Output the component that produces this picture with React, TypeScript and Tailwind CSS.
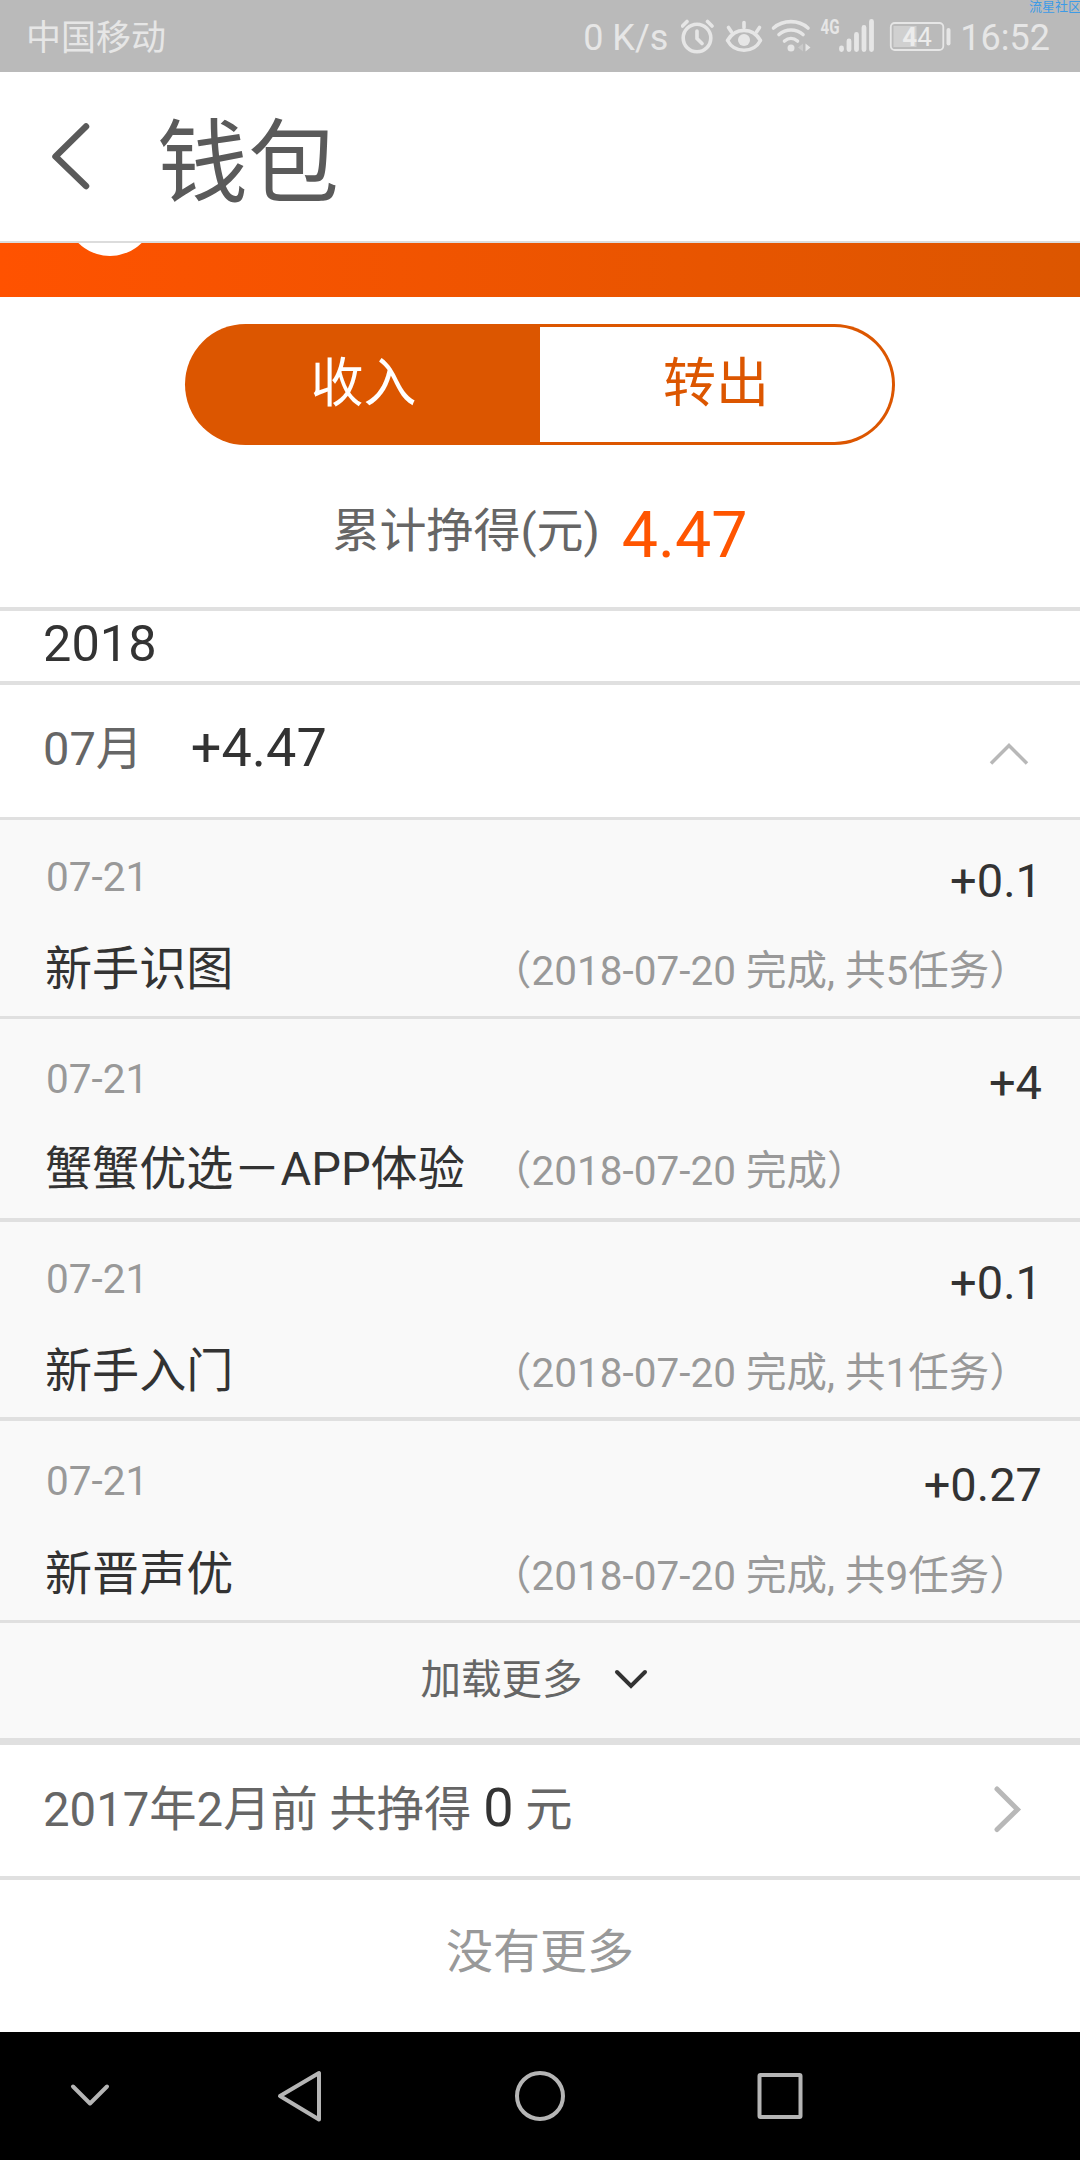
import type { ReactNode } from 'react';

const RECORDS = [
  { id: 1, date: '07-21', amount: '+0.1', title: '新手识图', note: '（2018-07-20 完成, 共5任务）', box: 'h-[199px] border-b-[3px] pt-[33px] gap-[35px]' },
  { id: 2, date: '07-21', amount: '+4', title: '蟹蟹优选－APP体验', note: '（2018-07-20 完成）', box: 'h-[203px] border-b-4 pt-9 gap-[33px]' },
  { id: 3, date: '07-21', amount: '+0.1', title: '新手入门', note: '（2018-07-20 完成, 共1任务）', box: 'h-[199px] border-b-4 pt-[33px] gap-[35px]' },
  { id: 4, date: '07-21', amount: '+0.27', title: '新晋声优', note: '（2018-07-20 完成, 共9任务）', box: 'h-[202px] border-b-[3px] pt-9 gap-9' },
];

function StatusBar() {
  return (
    <header className="relative flex h-[72px] items-center bg-[#bababa] pl-[26px] pr-[30px] pt-[3px] text-[35px] leading-none text-[#e6e6e6]">
      <span className="flex-1 pt-[2px]">中国移动</span>
      <span className="text-[36px]">0 K/s</span>
      <svg className="ml-[13px] h-[72px] w-[279px] -mt-[3px]" viewBox="682 0 279 72" fill="none" stroke="#e6e6e6" strokeWidth="3.6" strokeLinecap="round">
        {/* alarm */}
        <circle cx="698" cy="38" r="13.8" />
        <path d="M698 31v7.500l5 5M683.500 26l4.500-4.500M713 26l-4.500-4.500" />
        {/* eye comfort */}
        <path d="M728.500 40.500c8-13.500 25-13.500 33 0c-7 13-26 13-33 0Z" strokeLinejoin="round" />
        <circle cx="745" cy="40" r="6" fill="#e6e6e6" stroke="none" />
        <path d="M745 22.500v5M729.500 27.500l3 4.500M760.500 27.500l-3 4.500" />
        {/* wifi */}
        <path d="M774.500 28c10-8.500 25-8.500 34.500 0M780 34.500c7-6 17-6 24 0M785.500 41c4-3.400 9-3.400 13 0" />
        <circle cx="792" cy="48" r="3.500" fill="#e6e6e6" stroke="none" />
        <path d="M806.500 43.500v8l5-4z" fill="#e6e6e6" stroke="none" />
        <path d="M804 43.500v8l-5-4z" fill="#cacaca" stroke="none" />
        {/* mobile signal */}
        <text x="821.500" y="33.500" fontSize="20" fontWeight="700" textLength="19" lengthAdjust="spacingAndGlyphs" fill="#e6e6e6" stroke="none">4G</text>
        <path d="M842.500 48v1.500M850 41v8.500M857.500 34.500v15M865 27.500v22M872.500 21.500v28" strokeWidth="4.800" />
        {/* battery */}
        <rect x="891.800" y="23" width="52.500" height="27" rx="4" strokeWidth="1.800" />
        <rect x="894.500" y="26" width="23" height="21" fill="#d0d0d0" stroke="none" />
        <path d="M949.500 30v13.500" strokeWidth="4" />
        <text x="918" y="45.800" fontSize="26" textAnchor="middle" fill="#ececec" stroke="none"><tspan fontWeight="700">4</tspan>4</text>
      </svg>
      <span className="text-[36px]">16:52</span>
      <span className="absolute left-[1029px] top-0 w-[51px] overflow-hidden whitespace-nowrap text-[13px] leading-[13px] text-[#3d9be6]">流星社区</span>
    </header>
  );
}

function NavBar() {
  return (
    <div className="flex h-[171px] items-center border-b-2 border-[#dcdcdc] bg-white pl-[50px]">
      <svg className="h-[72px] w-[42px]" viewBox="0 0 42 72" fill="none" stroke="#5a5a5a" strokeWidth="6.500" strokeLinecap="round" strokeLinejoin="round">
        <path d="M36 5.500L5.500 35.500L36 65" />
      </svg>
      <h1 className="ml-[65px] pt-[15px] text-[91px] leading-[110px] text-[#5a5a5a]">钱包</h1>
    </div>
  );
}

function Divided({ className, children }: { className: string; children: ReactNode }) {
  return <div className={`flex border-[#e0e0e0] ${className}`}>{children}</div>;
}

function Records() {
  return (
    <ul className="bg-[#f9f9f9]">
      {RECORDS.map((r) => (
        <li key={r.id} className={`flex flex-col border-[#e0e0e0] pl-[45px] pr-[38px] ${r.box}`}>
          <div className="flex h-[53px] justify-between leading-[48px]">
            <span className="pl-px text-[40.5px] text-[#999]">{r.date}</span>
            <span className="mt-1 text-[47px] text-[#333]">{r.amount}</span>
          </div>
          <div className="flex items-baseline whitespace-nowrap leading-[56px]">
            <span className="w-[446px] text-[47.1px] text-[#333]">{r.title}</span>
            <span className="text-[40.5px] text-[#999]">{r.note}</span>
          </div>
        </li>
      ))}
    </ul>
  );
}

function SystemNav() {
  return (
    <nav className="h-32 bg-black">
      <svg className="h-32 w-full" viewBox="0 0 1080 128" fill="none" stroke="#b5b5b5" strokeWidth="4" strokeLinecap="round" strokeLinejoin="round">
        <path d="M73 54.500l17 17l17-17" />
        <path d="M319 41v46.500L280 64z" />
        <circle cx="540" cy="64" r="23" />
        <rect x="759.500" y="43" width="41" height="42" rx="1" />
      </svg>
    </nav>
  );
}

export default function App() {
  return (
    <div className="flex h-[2160px] w-[1080px] flex-col overflow-hidden bg-white font-[Roboto,'Noto_Sans_CJK_SC',sans-serif]">
      <StatusBar />
      <NavBar />

      {/* Bottom edge of the balance banner, mostly scrolled away */}
      <div className="h-[54px] overflow-hidden bg-linear-to-r from-[#ff5200] to-[#dc5600]">
        <div className="-mt-[77px] ml-[65px] size-[90px] rounded-full bg-white" />
      </div>

      <section className="flex h-[314px] flex-col items-center border-b-4 border-[#e0e0e0] pt-[27px]">
        <div className="grid h-[121px] w-[710px] grid-cols-2 text-[53px] leading-[111px]">
          <button className="rounded-l-full bg-[#dc5600] pb-px pl-[2px] text-white">收入</button>
          <button className="rounded-r-full border-[3px] border-l-0 border-[#dc5600] pb-px text-[#dc5600]">转出</button>
        </div>
        <div className="mt-[51px] flex h-[72px] leading-[72px]">
          <span className="-mt-[1px] text-[47px] text-[#666]">累计挣得(元)</span>
          <span className="ml-[22px] mt-[3px] text-[64.5px] text-[#ff5500]">4.47</span>
        </div>
      </section>

      <Divided className="h-[74px] border-b-4 pl-[43px] text-[50.5px] leading-[66px] text-[#333]">2018</Divided>
      <Divided className="h-[135px] items-center border-b-[3px] pl-[43px] pr-[50px]">
        <span className="-mt-[3px] text-[47px] text-[#666]">07月</span>
        <span className="-mt-2 ml-12 flex-1 text-[54px] text-[#333]">+4.47</span>
        <svg className="mt-[6px] h-6 w-[42px]" viewBox="0 0 42 24" fill="none" stroke="#b8b8b8" strokeWidth="3.500">
          <path d="M3 21.500L21 3.500l18 18" />
        </svg>
      </Divided>

      <Records />

      <div className="flex h-[122px] items-center justify-center border-b-[7px] border-[#e0e0e0] bg-[#f9f9f9] pr-[11px]">
        <span className="-mt-[2px] text-[40.5px] leading-[60px] text-[#666]">加载更多</span>
        <svg className="-mt-[2px] ml-[30px] h-6 w-9" viewBox="0 0 36 24" fill="none" stroke="#333" strokeWidth="4" strokeLinecap="round">
          <path d="M4 4l14 14L32 4" />
        </svg>
      </div>
      <Divided className="h-[135px] items-center border-b-4 pl-[43px] pr-[57px] text-[47.3px] text-[#666]">
        <span className="-mt-px flex-1">
          2017年2月前 共挣得 <span className="text-[54px] leading-none text-[#333]">0</span> 元
        </span>
        <svg className="-mt-[3px] h-[50px] w-[30px]" viewBox="0 0 30 50" fill="none" stroke="#b8b8b8" strokeWidth="5" strokeLinecap="round">
          <path d="M4 5l20.500 20.500L4 45.500" />
        </svg>
      </Divided>
      <div className="flex-1 pt-[38px] text-center text-[47px] leading-[68px] text-[#999]">没有更多</div>

      <SystemNav />
    </div>
  );
}
